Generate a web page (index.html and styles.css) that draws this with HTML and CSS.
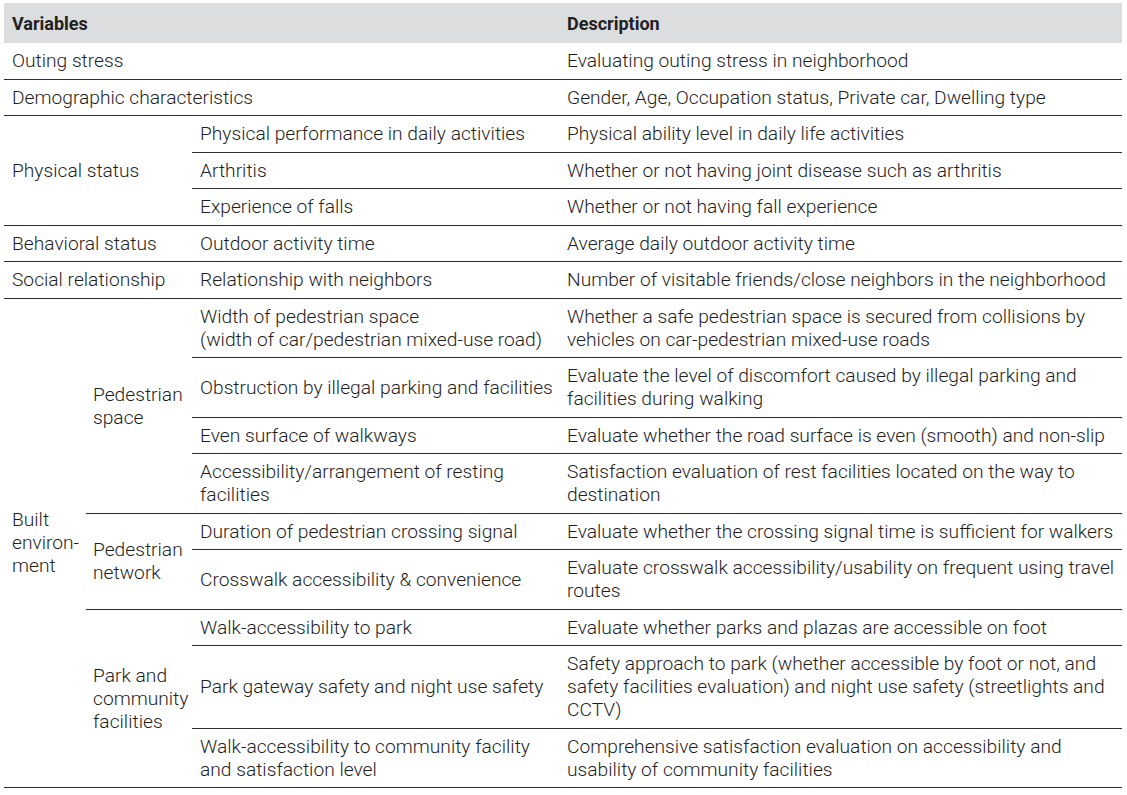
FILE: index.html
```html
<!DOCTYPE html>
<html lang="en">
<head>
<meta charset="utf-8">
<title>Variables</title>
<link rel="stylesheet" href="styles.css">
</head>
<body>
<table class="vars">
  <colgroup>
    <col class="c1"><col class="c2"><col class="c3"><col class="c4">
  </colgroup>
  <thead>
    <tr><th colspan="3">Variables</th><th class="d">Description</th></tr>
  </thead>
  <tbody>
    <tr><td colspan="3">Outing stress</td><td class="d">Evaluating outing stress in neighborhood</td></tr>
    <tr><td colspan="3">Demographic characteristics</td><td class="d">Gender, Age, Occupation status, Private car, Dwelling type</td></tr>
    <tr><td colspan="2" rowspan="3">Physical status</td><td class="v">Physical performance in daily activities</td><td class="d">Physical ability level in daily life activities</td></tr>
    <tr><td class="v">Arthritis</td><td class="d">Whether or not having joint disease such as arthritis</td></tr>
    <tr><td class="v">Experience of falls</td><td class="d">Whether or not having fall experience</td></tr>
    <tr><td colspan="2">Behavioral status</td><td class="v">Outdoor activity time</td><td class="d">Average daily outdoor activity time</td></tr>
    <tr><td colspan="2">Social relationship</td><td class="v">Relationship with neighbors</td><td class="d">Number of visitable friends/close neighbors in the neighborhood</td></tr>
    <tr><td rowspan="9">Built<br>environ-<br>ment</td><td rowspan="4" class="s">Pedestrian<br>space</td><td class="v">Width of pedestrian space<br>(width of car/pedestrian mixed-use road)</td><td class="d">Whether a safe pedestrian space is secured from collisions by<br>vehicles on car-pedestrian mixed-use roads</td></tr>
    <tr><td class="v">Obstruction by illegal parking and facilities</td><td class="d">Evaluate the level of discomfort caused by illegal parking and<br>facilities during walking</td></tr>
    <tr><td class="v">Even surface of walkways</td><td class="d">Evaluate whether the road surface is even (smooth) and non-slip</td></tr>
    <tr><td class="v">Accessibility/arrangement of resting<br>facilities</td><td class="d">Satisfaction evaluation of rest facilities located on the way to<br>destination</td></tr>
    <tr><td rowspan="2" class="s">Pedestrian<br>network</td><td class="v">Duration of pedestrian crossing signal</td><td class="d">Evaluate whether the crossing signal time is sufficient for walkers</td></tr>
    <tr><td class="v">Crosswalk accessibility &amp; convenience</td><td class="d">Evaluate crosswalk accessibility/usability on frequent using travel<br>routes</td></tr>
    <tr><td rowspan="3" class="s">Park and<br>community<br>facilities</td><td class="v">Walk-accessibility to park</td><td class="d">Evaluate whether parks and plazas are accessible on foot</td></tr>
    <tr><td class="v">Park gateway safety and night use safety</td><td class="d">Safety approach to park (whether accessible by foot or not, and<br>safety facilities evaluation) and night use safety (streetlights and<br>CCTV)</td></tr>
    <tr><td class="v">Walk-accessibility to community facility<br>and satisfaction level</td><td class="d">Comprehensive satisfaction evaluation on accessibility and<br>usability of community facilities</td></tr>
  </tbody>
</table>
</body>
</html>
```

FILE: styles.css
```css
html, body {
  margin: 0;
  padding: 0;
  background: #ffffff;
}

body {
  padding: 3px 0 0 4px;
  font-family: Roboto, "Liberation Sans", sans-serif;
  color: #1e1e1e;
}

.vars {
  border-collapse: collapse;
  table-layout: fixed;
  width: 1118px;
  font-size: 19.2px;
  font-weight: 300;
  line-height: 23px;
}

.c1 { width: 82px; }
.c2 { width: 106px; }
.c3 { width: 367px; }
.c4 { width: 563px; }

.vars th {
  background: #dcdddf;
  font-size: 18px;
  font-weight: 700;
  text-align: left;
  height: 40px;
  padding: 0 8px;
  vertical-align: middle;
  color: #222;
}

.vars td {
  padding: 6.25px 0 6.25px 8px;
  border-bottom: 1px solid #2e2e2e;
  vertical-align: middle;
  text-align: left;
  white-space: nowrap;
}

.vars td.s {
  padding-left: 7px;
}
```
